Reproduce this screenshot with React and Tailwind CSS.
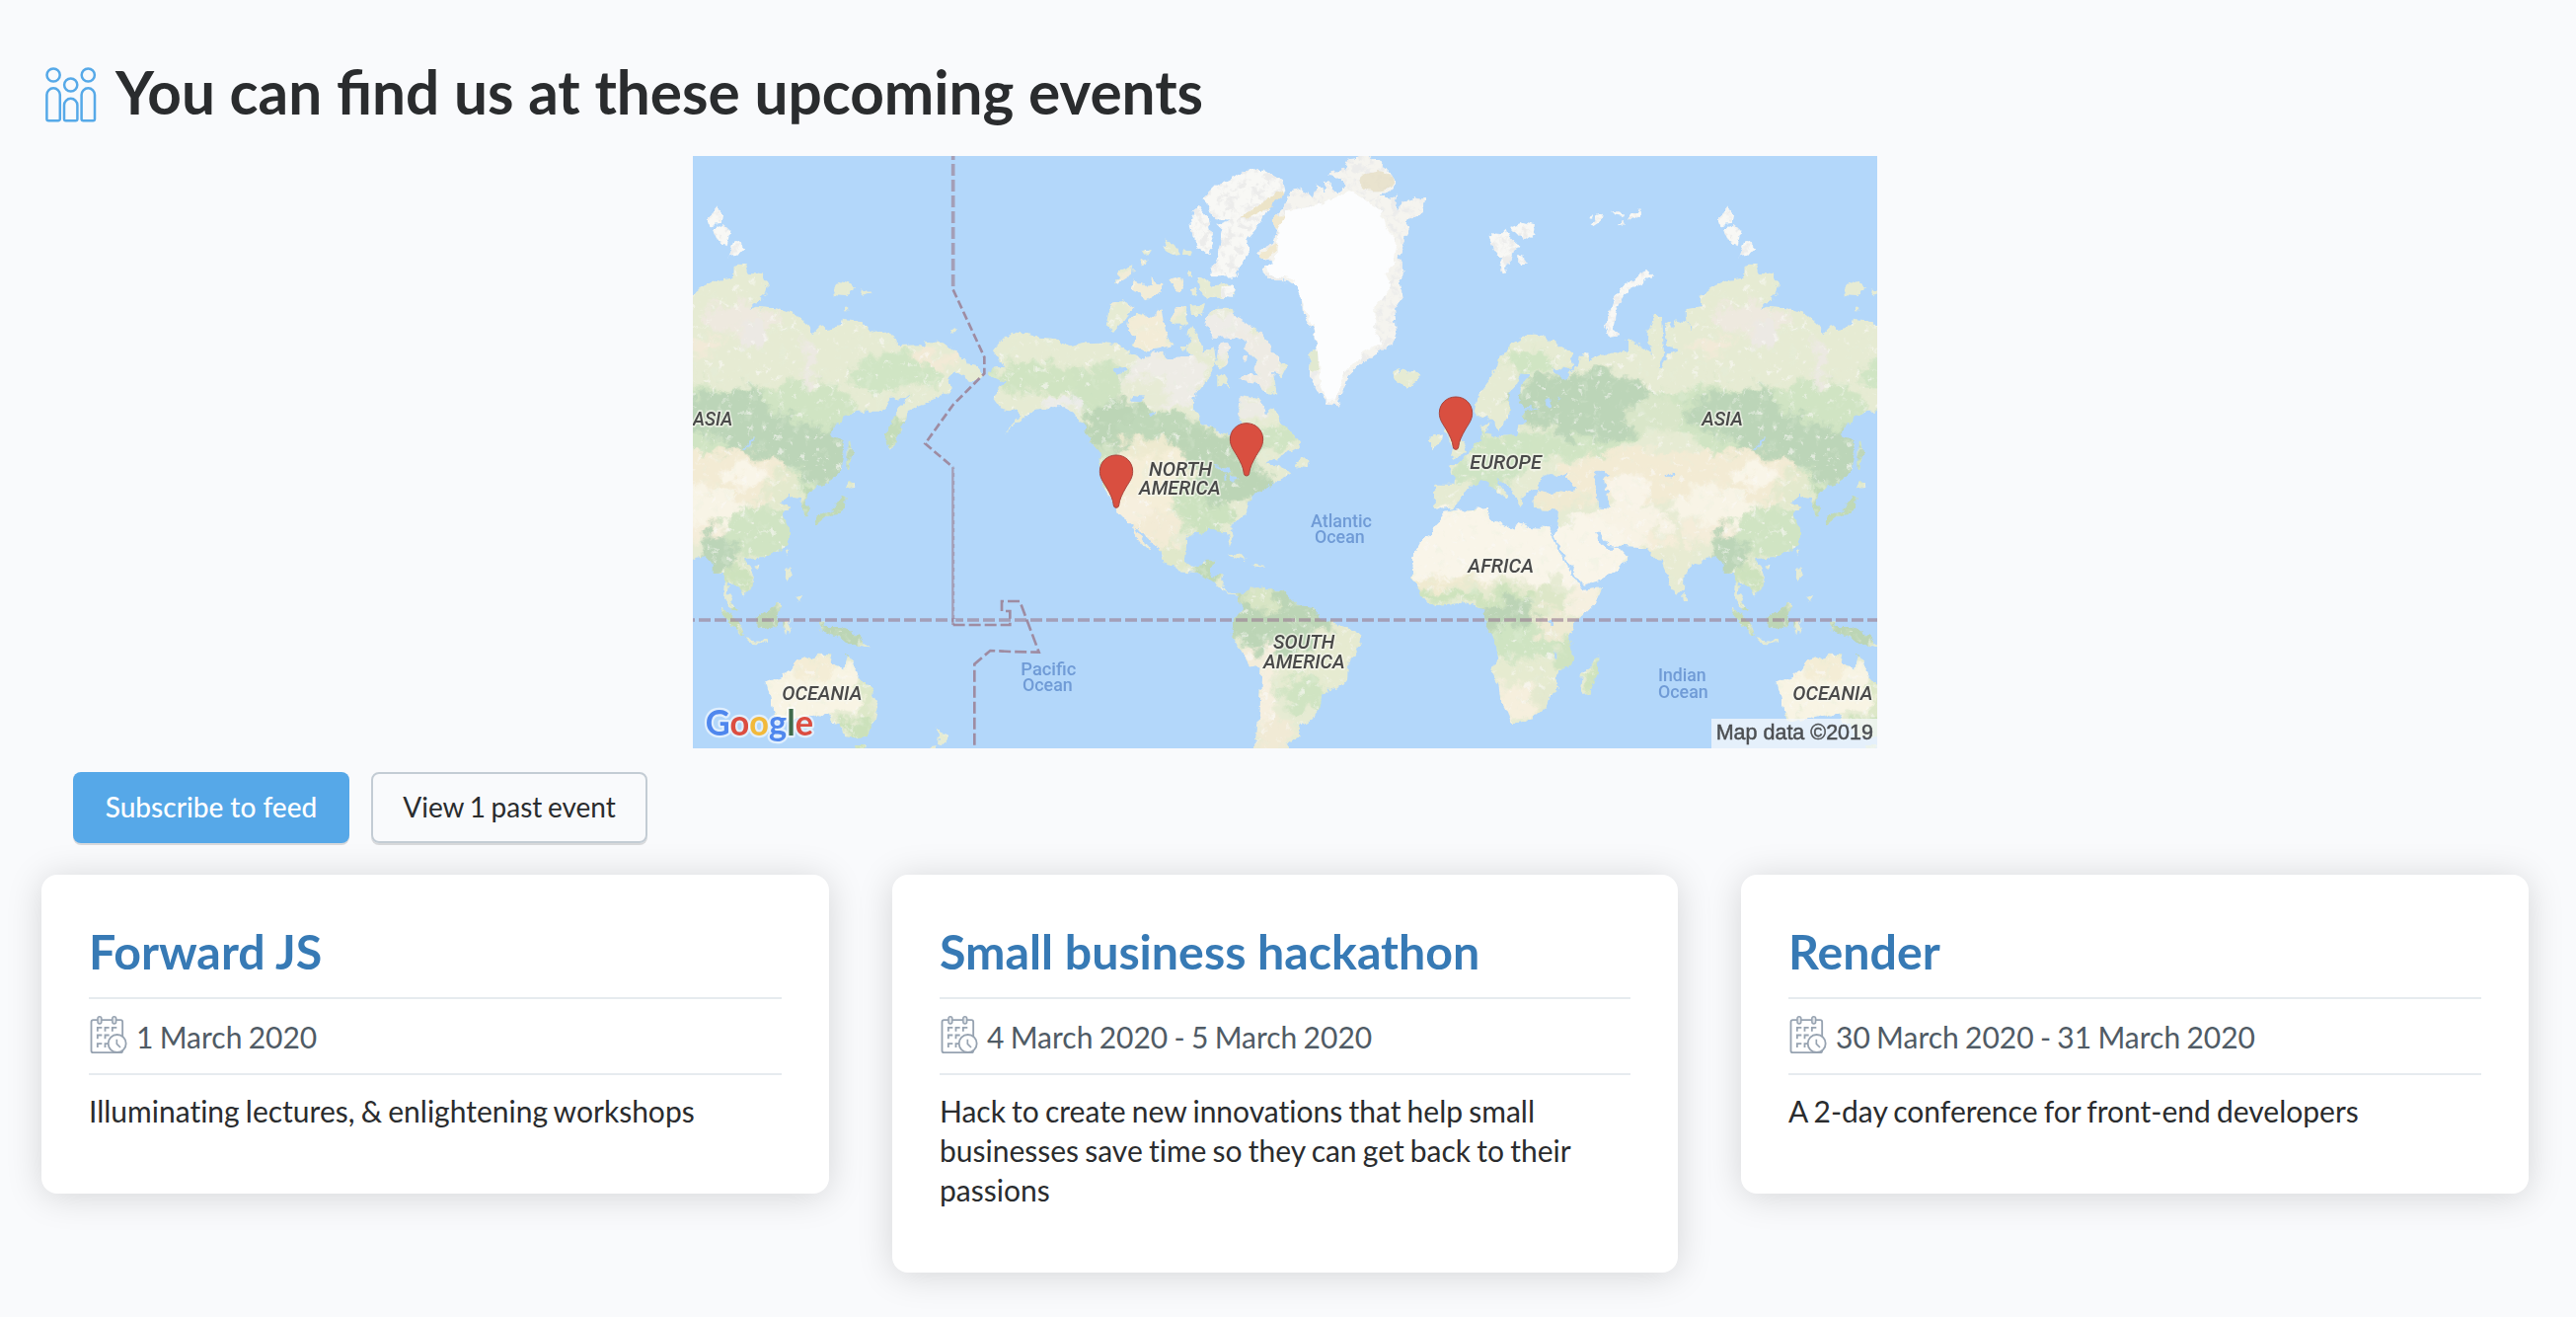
import React from 'react';

const events = [
  { title: 'Forward JS', date: '1 March 2020', text: 'Illuminating lectures, & enlightening workshops' },
  {
    title: 'Small business hackathon',
    date: '4 March 2020 - 5 March 2020',
    text: 'Hack to create new innovations that help small businesses save time so they can get back to their passions',
  },
  { title: 'Render', date: '30 March 2020 - 31 March 2020', text: 'A 2-day conference for front-end developers' },
];

const pins = [
  [2325, 805],
  [1689, 885],
  [1293, 982],
];

const mainland = [
  // Europe and Asia
  'M2378 800L2385 765L2400 735L2425 705L2445 670L2465 625L2500 590L2550 562L2590 572L2640 600L2680 630L2685 660L2670 675L2620 665L2635 700L2655 710L2665 690L2680 672L2700 665L2705 630L2725 625L2728 650L2745 640L2790 620L2850 618L2850 590L2840 578L2870 595L2900 605L2922 630L2910 580L2912 550L2928 510L2952 510L2955 560L2957 610L2958 630L2945 665L2955 665L2970 625L2998 612L2967 605L2963 560L2960 540L2978 530L2985 550L2995 520L3030 530L3045 560L3048 590L3040 540L3025 525L3022 490L3075 480L3065 450L3100 425L3150 402L3200 395L3203 365L3215 350L3238 352L3245 380L3290 385L3305 420L3300 445L3270 470L3245 495L3272 482L3340 488L3390 505L3430 540L3445 562L3465 540L3480 550L3525 540L3528 518L3592 525L3617 555L3650 565L3682 560L3700 600L3772 598L3782 612L3792 588L3842 592L3892 630L3912 655L3942 660L3960 685L3922 708L3872 678L3854 710L3864 742L3812 765L3762 785L3727 800L3722 840L3677 920L3664 890L3667 850L3702 800L3737 745L3702 770L3687 760L3652 800L3572 800L3532 820L3494 868L3532 885L3537 915L3532 950L3527 980L3502 1010L3477 1025L3452 1025L3422 1060L3422 1075L3437 1110L3417 1118L3412 1080L3402 1065L3372 1060L3372 1050L3342 1075L3372 1090L3352 1115L3372 1160L3372 1190L3342 1225L3312 1240L3272 1248L3237 1252L3262 1295L3264 1330L3237 1358L3217 1335L3187 1315L3182 1350L3202 1380L3217 1415L3192 1400L3174 1365L3177 1300L3170 1290L3140 1290L3140 1265L3117 1240L3090 1245L3050 1270L3020 1295L3018 1340L3000 1362L2980 1330L2960 1280L2955 1250L2935 1248L2905 1213L2820 1208L2790 1205L2765 1170L2748 1168L2758 1195L2780 1220L2805 1220L2815 1208L2843 1240L2825 1275L2770 1310L2712 1328L2700 1310L2665 1260L2625 1175L2635 1150L2640 1100L2565 1095L2562 1060L2580 1045L2575 1040L2540 1050L2522 1060L2530 1080L2520 1092L2505 1055L2490 1030L2455 1010L2445 1003L2465 1035L2485 1060L2475 1070L2470 1055L2430 1030L2420 1015L2400 1010L2360 1035L2330 1080L2320 1095L2290 1100L2258 1085L2260 1025L2320 1025L2325 995L2300 965L2330 960L2365 930L2385 895L2400 890L2405 840L2425 830L2420 870L2440 880L2510 870L2515 840L2540 830L2525 815L2535 795L2580 790L2535 785L2515 770L2520 730L2550 690L2525 685L2510 720L2485 745L2490 800L2475 830L2455 860L2440 840L2420 810L2400 820L2385 820Z',
  // Africa
  'M2290 1108L2340 1097L2420 1092L2425 1125L2500 1160L2510 1140L2560 1150L2605 1152L2618 1175L2640 1230L2670 1280L2705 1335L2710 1343L2770 1335L2750 1380L2690 1440L2670 1480L2680 1520L2680 1560L2640 1590L2630 1610L2637 1645L2610 1665L2600 1700L2560 1735L2495 1750L2485 1715L2460 1670L2455 1630L2435 1590L2450 1540L2440 1490L2415 1450L2410 1405L2395 1395L2350 1378L2300 1388L2265 1393L2235 1375L2210 1340L2190 1310L2195 1270L2190 1245L2220 1190L2250 1170L2270 1130Z',
  // North America
  'M905 690L920 670L960 668L950 655L935 650L918 618L950 580L1000 555L1040 572L1100 580L1160 602L1200 592L1250 590L1300 600L1340 625L1360 635L1420 620L1450 640L1520 635L1510 600L1515 560L1525 540L1540 570L1560 620L1585 600L1595 650L1580 690L1540 740L1525 790L1550 830L1600 860L1640 870L1650 900L1680 920L1680 850L1665 810L1670 750L1730 760L1750 810L1775 790L1790 830L1830 870L1855 900L1840 915L1790 935L1750 960L1785 965L1825 985L1780 1015L1735 1040L1700 1060L1690 1110L1650 1140L1637 1165L1650 1200L1640 1205L1628 1165L1570 1160L1530 1170L1505 1190L1500 1250L1530 1275L1560 1270L1570 1250L1588 1250L1580 1300L1620 1300L1615 1330L1640 1358L1690 1358L1690 1370L1640 1362L1600 1325L1540 1290L1480 1285L1435 1255L1430 1225L1390 1190L1360 1155L1350 1155L1395 1225L1380 1215L1355 1185L1340 1140L1300 1110L1288 1085L1252 1030L1248 960L1240 920L1215 890L1195 850L1160 800L1140 790L1085 790L1040 795L1010 825L950 867L1005 815L990 800L940 790L918 760L940 730L955 710L935 705Z',
  // South America
  'M1675 1360L1690 1345L1720 1335L1800 1345L1840 1385L1890 1395L1910 1430L1940 1440L2000 1460L2035 1480L2030 1520L2000 1560L1995 1610L1970 1640L1925 1655L1910 1700L1880 1740L1845 1760L1850 1785L1820 1805L1800 1840L1710 1840L1720 1770L1730 1700L1735 1590L1690 1560L1640 1475L1650 1450L1650 1430L1680 1395L1660 1362Z',
  // Australia
  'M3302 1625L3362 1600L3392 1560L3442 1545L3462 1538L3502 1540L3497 1560L3537 1588L3547 1530L3562 1560L3577 1600L3617 1640L3642 1690L3632 1740L3607 1785L3572 1790L3537 1785L3522 1750L3502 1745L3492 1725L3452 1718L3402 1730L3372 1740L3327 1745L3317 1690Z',
];

const islands = [
  'M2290 850L2320 830L2330 870L2345 900L2358 930L2310 942L2318 905Z',
  'M2250 885L2265 872L2283 868L2278 905L2250 915Z',
  // Iceland
  'M2130 680L2150 672L2155 685L2200 668L2217 690L2205 710L2175 728L2150 715Z',
  // Madagascar
  'M2710 1590L2740 1570L2757 1545L2760 1570L2735 1655L2712 1658L2704 1635Z',
  // Japan and Sakhalin
  'M3445 1130L3460 1115L3500 1100L3520 1080L3530 1055L3542 1060L3540 1090L3530 1112L3500 1115L3475 1130L3455 1145Z',
  'M3545 1005L3575 1018L3570 1028L3545 1033Z',
  'M3548 890L3556 890L3562 930L3552 980L3547 975Z',
  // Philippines
  'M3360 1280L3370 1275L3378 1300L3365 1315Z',
  'M3392 1365L3410 1358L3405 1380Z',
  'M3360 1220L3370 1218L3365 1240Z',
  'M3265 1268L3277 1262L3275 1275Z',
  // Indonesia and New Guinea
  'M3155 1390L3185 1410L3215 1440L3238 1475L3230 1482L3195 1450Z',
  'M3270 1425L3305 1405L3335 1382L3348 1390L3335 1420L3330 1455L3290 1462L3272 1445Z',
  'M3235 1492L3305 1498L3308 1505L3245 1502Z',
  'M3355 1440L3380 1432L3370 1450L3378 1475L3362 1460L3357 1480Z',
  'M3458 1440L3475 1438L3480 1455L3530 1455L3575 1480L3615 1520L3580 1508L3545 1510L3510 1480L3470 1465Z',
  'M3015 1355L3030 1362L3028 1378L3018 1378Z',
  // New Zealand
  'M3815 1755L3835 1780L3850 1788L3835 1815L3825 1812L3828 1790Z',
  'M3800 1822L3818 1818L3810 1840L3795 1840Z',
  'M3570 1818L3600 1818L3590 1840L3575 1840Z',
  // Caribbean
  'M1630 1232L1665 1238L1692 1256L1660 1248Z',
  'M1712 1262L1745 1270L1715 1275Z',
  // Newfoundland
  'M1835 965L1855 935L1878 955L1870 972Z',
  // Siberian islands
  'M3505 430L3520 405L3555 412L3570 425L3550 450L3510 448Z',
  'M3585 430L3620 442L3600 450Z',
  'M3532 490L3545 480L3558 490Z',
  'M3858 555L3880 546L3888 555L3865 566Z',
  // Canadian arctic islands
  'M1275 465L1310 460L1345 485L1320 520L1290 555L1262 535Z',
  'M1330 520L1355 500L1400 515L1430 490L1440 560L1465 600L1380 618L1340 600L1355 575L1325 555Z',
  'M1470 485L1505 480L1500 500L1510 530L1490 545L1460 515Z',
  'M1520 480L1560 475L1550 510L1525 510Z',
  'M1570 500L1600 485L1630 485L1650 490L1655 510L1690 530L1720 550L1755 590L1770 620L1810 665L1795 695L1770 680L1780 740L1755 750L1715 710L1672 705L1680 690L1720 690L1715 640L1680 610L1690 590L1650 580L1580 575L1568 530Z',
  'M1605 600L1630 590L1640 600L1630 660L1610 670L1595 655Z',
  'M1600 690L1615 685L1642 725L1615 718L1600 728Z',
  'M1345 400L1370 410L1385 425L1400 420L1400 385L1415 410L1432 415L1430 440L1380 460L1365 440L1335 430Z',
  'M1290 400L1310 370L1345 355L1340 385L1300 410Z',
  'M1435 280L1470 292L1488 325L1475 330L1450 320Z',
  'M1500 300L1520 315L1515 335L1497 325Z',
  'M1450 400L1490 390L1500 430L1480 440Z',
  'M1515 430L1530 425L1538 445L1518 450Z',
  'M1510 375L1530 375L1530 392L1515 392Z',
  'M1540 390L1570 400L1580 420L1625 412L1655 430L1650 450L1570 458L1550 440Z',
  'M1360 340L1390 335L1390 352L1375 355Z',
  'M1370 310L1395 303L1400 318L1375 320Z',
  'M1678 630L1692 630L1688 648L1678 645Z',
  'M1490 600L1510 600L1505 615Z',
];

// Islands under snow or bare rock
const snow = [
  'M1560 150L1600 110L1680 70L1740 65L1800 100L1808 130L1760 170L1730 230L1690 280L1698 320L1660 360L1665 392L1580 390L1580 370L1600 340L1620 250L1600 230L1640 215L1590 210Z',
  'M1540 175L1515 220L1530 290L1570 325L1590 290L1575 220Z',
  'M3125 220L3140 190L3150 178L3165 205L3160 230L3130 235Z',
  'M3135 245L3170 232L3190 250L3182 298L3150 280Z',
  'M3205 280L3215 285L3235 305L3220 322L3185 328Z',
  'M2425 260L2460 265L2480 245L2490 275L2515 295L2495 320L2475 382L2455 360L2470 330L2440 315Z',
  'M2490 240L2530 225L2565 235L2560 260L2530 280Z',
  'M2515 325L2530 325L2540 350L2515 352Z',
  'M2790 575L2775 545L2790 510L2805 460L2830 420L2880 390L2910 375L2922 385L2900 405L2850 430L2825 470L2812 500L2805 540L2820 570Z',
  'M2720 212L2740 202L2735 215Z',
  'M2735 235L2755 205L2772 200L2768 220L2745 235Z',
  'M2800 188L2835 200L2830 210L2808 205Z',
  'M2845 215L2860 195L2885 195L2890 180L2892 200L2860 222Z',
  'M2815 235L2835 222L2838 232Z',
  'M1610 425L1640 412L1658 435L1640 455L1608 450Z',
];

const greenland =
  'M1810 170L1820 130L1860 120L1890 150L1900 105L1930 140L1925 100L1945 110L1970 135L1985 110L1960 90L1930 75L1990 60L2000 30L2060 20L2100 45L2140 100L2130 130L2095 140L2130 155L2150 140L2140 190L2170 160L2200 150L2230 160L2220 200L2175 225L2185 240L2165 290L2150 330L2170 370L2155 400L2165 450L2140 490L2145 560L2130 600L2080 625L2050 640L2000 690L1980 740L1965 785L1940 780L1910 740L1880 690L1885 620L1900 610L1890 550L1860 500L1855 460L1835 415L1800 400L1760 400L1735 370L1770 350L1715 320L1770 290L1780 250L1765 220L1800 185Z';
const iceSheet =
  'M1815 190L1900 175L1960 150L2000 130L2050 160L2100 190L2110 240L2130 270L2145 300L2135 350L2110 380L2130 420L2080 480L2080 560L2100 590L2040 625L1985 690L1960 770L1935 770L1915 720L1905 620L1890 540L1855 460L1830 400L1760 385L1745 360L1778 340L1780 290L1785 245Z';

const water = [
  'M2585 1000L2610 990L2635 1000L2665 980L2660 1000L2690 1035L2685 1050L2650 1042L2600 1048L2575 1040Z',
  'M2740 1005L2765 980L2800 995L2775 1005L2780 1030L2795 1045L2785 1055L2795 1095L2760 1090L2755 1040Z',
  'M2965 995L2985 980L2990 985L2970 1000Z',
  'M3230 915L3265 875L3270 870L3262 892L3235 918Z',
  'M2595 770L2608 765L2610 785L2598 788Z',
  'M2630 750L2642 765L2640 772Z',
  'M1285 670L1320 665L1325 675L1295 690Z',
  'M1345 750L1380 755L1365 772L1340 770Z',
  'M1390 808L1415 800L1400 815Z',
  'M1590 965L1630 972L1640 985L1615 985Z',
  'M1620 985L1632 1010L1622 1015Z',
  'M1640 990L1665 1000L1650 1020L1640 1005Z',
  'M2608 1440L2622 1438L2620 1452L2608 1452Z',
  'M2625 1525L2632 1535L2632 1555L2626 1550Z',
];

// Vegetation and desert zones: [cx, cy, rx, ry, fill]
const zones = [
  [3200, 900, 480, 180, '#d0e4c3'],
  [2740, 780, 190, 105, '#bcd5b8'],
  [2930, 820, 90, 60, '#d9e6c9'],
  [3220, 805, 190, 80, '#bcd5b8'],
  [3330, 900, 160, 75, '#bcd5b8'],
  [3420, 760, 150, 50, '#d0e4c3'],
  [3690, 680, 140, 60, '#d0e5c4'],
  [3680, 870, 50, 60, '#c4dcb9'],
  [3470, 940, 80, 100, '#bcd5b8'],
  [2580, 770, 90, 80, '#bcd5b8'],
  [2540, 650, 80, 35, '#d0e5c3'],
  [2550, 910, 180, 45, '#cfe4c3'],
  [2420, 980, 110, 45, '#cfe4c4'],
  [2650, 900, 90, 30, '#d0e4c3'],
  [2950, 930, 130, 70, '#e6ebd3'],
  [2900, 1000, 270, 80, '#f3ebd4'],
  [3130, 1010, 260, 90, '#f3ebd4'],
  [3110, 1090, 130, 60, '#f8f4e6'],
  [2850, 1060, 60, 80, '#f9f4e8'],
  [3240, 990, 80, 30, '#f9f5e8'],
  [3080, 1170, 110, 25, '#f5edda'],
  [2840, 1150, 150, 60, '#f8f3e5'],
  [2720, 1230, 140, 100, '#f9f5e9'],
  [2980, 1240, 70, 90, '#e8ebd2'],
  [2960, 1195, 45, 25, '#f5edd9'],
  [2620, 1065, 90, 30, '#f0ead2'],
  [3280, 1170, 110, 80, '#d0e4c3'],
  [3160, 1230, 50, 70, '#bcd5b8'],
  [3230, 1310, 45, 50, '#cde2bd'],
  [3350, 1040, 60, 50, '#e3e9cd'],
  [3040, 620, 110, 60, '#e6ebd3'],
  [3220, 520, 110, 45, '#eee9df'],
  [3100, 600, 60, 30, '#f2ead8'],
  [3260, 570, 40, 35, '#ece9e4'],
  [3820, 640, 60, 25, '#f2ead6'],
  [3430, 640, 20, 90, '#ece9e2'],
  [2400, 1220, 270, 140, '#f9f5e9'],
  [2330, 1335, 200, 30, '#f0ead0'],
  [2450, 1345, 160, 28, '#e6ead0'],
  [2300, 1370, 120, 25, '#cee3bd'],
  [2500, 1370, 120, 28, '#cfe3be'],
  [2500, 1430, 120, 60, '#bcd4b6'],
  [2530, 1500, 130, 50, '#cfe4c2'],
  [2600, 1390, 50, 60, '#dde7c8'],
  [2720, 1380, 60, 60, '#f6f0e0'],
  [2620, 1450, 50, 50, '#eeead3'],
  [2660, 1540, 30, 50, '#cfe3c0'],
  [2540, 1590, 110, 35, '#e6ebd0'],
  [2520, 1680, 70, 60, '#f6efdd'],
  [2595, 1670, 30, 60, '#e4e9cf'],
  [1060, 700, 150, 50, '#d0e4c2'],
  [1160, 780, 90, 25, '#ececea'],
  [1260, 740, 100, 80, '#cfe3c2'],
  [1300, 840, 110, 85, '#bcd5b6'],
  [1430, 850, 140, 50, '#bfd8b9'],
  [1550, 920, 200, 60, '#bcd5b6'],
  [1440, 700, 130, 80, '#eeece6'],
  [1380, 740, 80, 40, '#e7ebd5'],
  [1710, 790, 50, 40, '#ecebe4'],
  [1780, 880, 70, 40, '#d0e4c3'],
  [1390, 1010, 140, 110, '#f5eed8'],
  [1390, 910, 90, 30, '#eeead0'],
  [1270, 960, 45, 60, '#cfe1c2'],
  [1560, 1080, 90, 100, '#cce2bf'],
  [1640, 1020, 120, 70, '#bcd5b6'],
  [1400, 1160, 90, 60, '#f3ebd6'],
  [1340, 1100, 60, 40, '#f6efde'],
  [1470, 1240, 60, 40, '#e0e8ca'],
  [1580, 1280, 60, 40, '#c0d9b6'],
  [1800, 1430, 170, 115, '#bcd5b6'],
  [1740, 1370, 60, 40, '#d8e5c4'],
  [1960, 1520, 80, 70, '#e6ead0'],
  [1900, 1610, 110, 70, '#e6ebd1'],
  [1860, 1660, 70, 60, '#d0e4c2'],
  [1750, 1640, 28, 140, '#f6efdf'],
  [1780, 1790, 60, 60, '#f1ead5'],
  [1700, 1560, 50, 30, '#f3ecda'],
  [3440, 1650, 170, 90, '#f8f4e4'],
  [3440, 1580, 80, 35, '#f4edd6'],
  [3600, 1650, 24, 120, '#dde8c8'],
  [3590, 1770, 60, 35, '#cbe1ba'],
  [3310, 1430, 60, 60, '#bdd5b5'],
  [3530, 1480, 90, 50, '#bcd5b5'],
  [3200, 1450, 50, 60, '#c4dbb6'],
  [3480, 1100, 90, 60, '#c0d9b6'],
  [2750, 1600, 20, 60, '#cfe3bd'],
  [1400, 430, 120, 70, '#f1ecd8'],
  [1400, 560, 80, 60, '#f3ecd7'],
  [1620, 560, 80, 60, '#eeece8'],
  [1720, 650, 80, 90, '#eeebe4'],
];

function WorldMap() {
  return (
    <svg className="block h-[600px] w-[1200px]" viewBox="6 24 3600 1800" fontFamily="Roboto, sans-serif">
      <defs>
        <clipPath id="land">
          {mainland.concat(islands).map((d) => (
            <path key={d} d={d} />
          ))}
        </clipPath>
        <clipPath id="greenland">
          <path d={greenland} />
        </clipPath>
        <filter id="coast" filterUnits="userSpaceOnUse" x="0" y="0" width="4000" height="1850">
          <feTurbulence type="fractalNoise" baseFrequency="0.035" numOctaves="3" seed="4" result="n" />
          <feDisplacementMap in="SourceGraphic" in2="n" scale="26" xChannelSelector="R" yChannelSelector="G" />
          <feGaussianBlur stdDeviation="1.8" />
        </filter>
        <filter id="zone" filterUnits="userSpaceOnUse" x="0" y="0" width="4000" height="1850">
          <feTurbulence type="fractalNoise" baseFrequency="0.02" numOctaves="4" seed="9" result="n" />
          <feGaussianBlur in="SourceGraphic" stdDeviation="6" result="b" />
          <feDisplacementMap in="b" in2="n" scale="90" xChannelSelector="R" yChannelSelector="G" />
        </filter>
        <filter id="speckle" filterUnits="userSpaceOnUse" x="0" y="0" width="4000" height="1850">
          <feTurbulence type="fractalNoise" baseFrequency="0.045" numOctaves="3" seed="21" />
          <feColorMatrix values="0 0 0 0 0.96  0 0 0 0 0.95  0 0 0 0 0.93  6 0 0 0 -3.8" />
        </filter>
        <filter id="moss" filterUnits="userSpaceOnUse" x="0" y="0" width="4000" height="1850">
          <feTurbulence type="fractalNoise" baseFrequency="0.03" numOctaves="3" seed="33" />
          <feColorMatrix values="0 0 0 0 0.78  0 0 0 0 0.87  0 0 0 0 0.72  0 5 0 0 -3" />
        </filter>
        <filter id="rock" filterUnits="userSpaceOnUse" x="0" y="0" width="4000" height="1850">
          <feTurbulence type="fractalNoise" baseFrequency="0.04" numOctaves="3" seed="5" />
          <feColorMatrix values="0 0 0 0 0.84  0 0 0 0 0.84  0 0 0 0 0.83  0 6 0 0 -2.9" result="r" />
          <feComposite in="r" in2="SourceGraphic" operator="in" result="c" />
          <feMerge>
            <feMergeNode in="SourceGraphic" />
            <feMergeNode in="c" />
          </feMerge>
        </filter>
        <filter id="soft">
          <feGaussianBlur stdDeviation="1.8" />
        </filter>
        <g id="world">
          <g filter="url(#coast)">
            <g clipPath="url(#land)">
              <rect x="0" y="0" width="4000" height="1850" fill="#e6ebd3" />
              <g filter="url(#zone)">
                {zones.map(([cx, cy, rx, ry, fill], i) => (
                  <ellipse key={i} cx={cx} cy={cy} rx={rx} ry={ry} fill={fill} />
                ))}
              </g>
              <rect x="0" y="0" width="4000" height="1850" filter="url(#moss)" opacity="0.3" />
              <rect x="0" y="0" width="4000" height="1850" filter="url(#speckle)" opacity="0.6" />
            </g>
            <g fill="#f8f8f5" filter="url(#rock)">
              {snow.map((d) => (
                <path key={d} d={d} />
              ))}
            </g>
            <g clipPath="url(#greenland)">
              <path d={greenland} fill="#f5f4ef" filter="url(#rock)" />
              <ellipse cx="2085" cy="100" rx="50" ry="30" fill="#e6dfc6" opacity="0.8" />
              <ellipse cx="1790" cy="225" rx="35" ry="20" fill="#f0e8cf" />
              <path d="M1790 285L1720 330L1760 335Z" fill="#f0e8cf" />
              <ellipse cx="1892" cy="645" rx="14" ry="35" fill="#e1e9d0" />
              <path d={iceSheet} fill="#fcfdfe" />
            </g>
            <path d="M1670 210L1740 165L1800 125L1805 140L1760 175L1690 215Z" fill="#ece4c8" />
            <g fill="#b3d7fa">
              {water.map((d) => (
                <path key={d} d={d} />
              ))}
            </g>
          </g>
        </g>
      </defs>
      <rect x="6" y="24" width="3600" height="1800" fill="#b3d7fa" />
      <use href="#world" transform="translate(-3072 0)" />
      <use href="#world" />
      <g fill="none" stroke="#9b7f93" strokeOpacity="0.65" filter="url(#soft)">
        <path d="M-24 1434H3606" strokeWidth="11" strokeDasharray="36 12" />
        <path d="M797 0V430" strokeWidth="11" strokeDasharray="36 12" />
        <path d="M797 430L892 635V685L797 780L712 898L797 970" strokeWidth="8" strokeDasharray="26 11" strokeOpacity="0.85" />
        <path d="M797 970V1449" strokeWidth="9" />
        <path d="M802 975V1449" strokeWidth="5" strokeDasharray="12 12" stroke="#b3d7fa" strokeOpacity="1" />
        <path
          d="M797 1449H970V1407H945V1377H1000L1058 1532L970 1530L910 1527L862 1568V1826"
          strokeWidth="8"
          strokeDasharray="36 12"
          strokeOpacity="0.85"
        />
      </g>
      <g
        fontSize="60"
        fontStyle="italic"
        fontWeight="500"
        fill="#4a4a4a"
        stroke="#f7f6ee"
        strokeOpacity="0.7"
        strokeWidth="10"
        strokeLinejoin="round"
        paintOrder="stroke"
        filter="url(#soft)"
      >
        <text x="6" y="842" textLength="121" lengthAdjust="spacingAndGlyphs">ASIA</text>
        <text x="3073" y="842" textLength="125" lengthAdjust="spacingAndGlyphs">ASIA</text>
        <text x="1392" y="997" textLength="192" lengthAdjust="spacingAndGlyphs">NORTH</text>
        <text x="1362" y="1052" textLength="248" lengthAdjust="spacingAndGlyphs">AMERICA</text>
        <text x="1770" y="1520" textLength="187" lengthAdjust="spacingAndGlyphs">SOUTH</text>
        <text x="1740" y="1581" textLength="248" lengthAdjust="spacingAndGlyphs">AMERICA</text>
        <text x="2368" y="975" textLength="218" lengthAdjust="spacingAndGlyphs">EUROPE</text>
        <text x="2362" y="1291" textLength="200" lengthAdjust="spacingAndGlyphs">AFRICA</text>
        <text x="277" y="1676" textLength="243" lengthAdjust="spacingAndGlyphs">OCEANIA</text>
        <text x="3349" y="1676" textLength="243" lengthAdjust="spacingAndGlyphs">OCEANIA</text>
      </g>
      <g fontSize="53" fontWeight="500" fill="#6f9bd6" filter="url(#soft)">
        <text x="1003" y="1602" textLength="168" lengthAdjust="spacingAndGlyphs">Pacific</text>
        <text x="1008" y="1651" textLength="152" lengthAdjust="spacingAndGlyphs">Ocean</text>
        <text x="1884" y="1152" textLength="186" lengthAdjust="spacingAndGlyphs">Atlantic</text>
        <text x="1896" y="1201" textLength="152" lengthAdjust="spacingAndGlyphs">Ocean</text>
        <text x="2940" y="1621" textLength="146" lengthAdjust="spacingAndGlyphs">Indian</text>
        <text x="2940" y="1670" textLength="152" lengthAdjust="spacingAndGlyphs">Ocean</text>
      </g>
      {pins.map(([x, y]) => (
        <path
          key={x}
          transform={`translate(${x} ${y})`}
          d="M0 -49C28 -49 50 -28 50 0C50 20 40 32 29 50C18 70 10 84 8 104Q7 111 0 111Q-7 111 -8 104C-10 84 -18 70 -29 50C-40 32 -50 20 -50 0C-50 -28 -28 -49 0 -49Z"
          fill="#d94f40"
          stroke="#a8443c"
          strokeWidth="3"
        />
      ))}
      <text
        x="44"
        y="1785"
        fontFamily="Lato, sans-serif"
        fontSize="110"
        fontWeight="700"
        textLength="328"
        lengthAdjust="spacingAndGlyphs"
        stroke="#ffffff"
        strokeOpacity="0.6"
        strokeWidth="14"
        strokeLinejoin="round"
        paintOrder="stroke"
        filter="url(#soft)"
      >
        <tspan fill="#4f87ee">G</tspan>
        <tspan fill="#dc4d41">o</tspan>
        <tspan fill="#f2b93b">o</tspan>
        <tspan fill="#4f87ee">g</tspan>
        <tspan fill="#3f6b4c">l</tspan>
        <tspan fill="#dc4d41">e</tspan>
      </text>
      <rect x="3102" y="1734" width="504" height="90" fill="#f5f8fb" fillOpacity="0.75" />
      <text
        x="3116"
        y="1797"
        fontFamily="Liberation Sans, sans-serif"
        fontSize="66"
        fill="#4c4f52"
        stroke="#4c4f52"
        strokeWidth="1.5"
        textLength="478"
        lengthAdjust="spacingAndGlyphs"
        filter="url(#soft)"
      >
        Map data ©2019
      </text>
    </svg>
  );
}

function PeopleIcon() {
  return (
    <svg className="mt-[9px] h-[60px] w-[56px]" viewBox="44 66 56 60" fill="none" stroke="#56a9e8" strokeWidth="2.5">
      <circle cx="54.1" cy="76" r="6.6" />
      <circle cx="71.7" cy="86" r="6.6" />
      <circle cx="89.3" cy="76" r="6.6" />
      <path d="M47.4 96a6.7 6.7 0 0 1 13.4 0v24.4a1.8 1.8 0 0 1-1.8 1.8H49.2a1.8 1.8 0 0 1-1.8-1.8z" />
      <path d="M65 106.500a6.700 6.700 0 0 1 13.400 0v13.900a1.800 1.800 0 0 1-1.800 1.800H66.800a1.800 1.800 0 0 1-1.800-1.800z" />
      <path d="M82.600 96a6.700 6.700 0 0 1 13.400 0v24.400a1.800 1.800 0 0 1-1.800 1.800H84.400a1.800 1.800 0 0 1-1.800-1.800z" />
    </svg>
  );
}

function CalendarIcon() {
  return (
    <svg className="-mt-[5px] h-[42px] w-[40px] shrink-0" viewBox="180 471 120 126" fill="none" stroke="#97a3b1" strokeWidth="5.5">
      <rect x="187.5" y="489.5" width="95" height="99" rx="6" />
      <rect x="207" y="479" width="11.5" height="22" rx="5.7" fill="#e2e6ea" strokeWidth="4.5" />
      <rect x="251.5" y="479" width="11.5" height="22" rx="5.7" fill="#e2e6ea" strokeWidth="4.5" />
      <path d="M206.500 524V512.500H220M229.500 524V512.500H242M251.500 524V512.500H265M206.500 547V535.500H220M229.500 547V535.500H242M206.500 573V561.500H220M229.500 573V561.500H242" />
      <circle cx="266" cy="561" r="27" fill="#fff" />
      <path d="M265 548V562L276 573" strokeWidth="5" />
    </svg>
  );
}

function EventCard({ title, date, text }) {
  return (
    <article className="rounded-2xl bg-white px-12 pt-12 pb-16 shadow-[0_3px_36px_rgba(0,0,0,0.15)]">
      <h2 className="border-b-2 border-[#e6ebef] pb-[18px] text-[48.3px] leading-[58px] font-bold text-[#377ab5]">{title}</h2>
      <div className="flex gap-2 border-b-2 border-[#e6ebef] pt-5 pb-[18px] text-[30px] leading-9 text-[#505b65]">
        <CalendarIcon />
        <span className="h-9 [word-spacing:-1.4px]">{date}</span>
      </div>
      <p className="pt-4 text-[30px] leading-10 [font-variant-ligatures:none] [word-spacing:-1.5px]">{text}</p>
    </article>
  );
}

export default function App() {
  return (
    <main className="h-[1334px] w-[2610px] overflow-hidden bg-[#f9fafc] pt-[57px] pr-12 pl-[42px] font-['Lato',sans-serif] text-[#2a2c2e]">
      <header className="flex h-[101px] items-start gap-[17px] pl-0.5">
        <PeopleIcon />
        <h1 className="text-[60.3px] leading-[72px] font-bold whitespace-nowrap">You can find us at these upcoming events</h1>
      </header>
      <div className="flex justify-center">
        <WorldMap />
      </div>
      <div className="mt-6 flex gap-[22px] pl-8">
        <button className="h-[72px] w-[280px] rounded-lg bg-[#56a8e8] pb-0.5 text-[28px] font-medium text-white shadow-[0_2px_0_rgba(0,0,0,0.13)]">
          Subscribe to feed
        </button>
        <button className="h-[72px] w-[280px] rounded-lg border-2 border-[#c3ccd4] pb-0.5 text-[28px] [word-spacing:-1.5px] shadow-[0_2px_0_rgba(0,0,0,0.13)]">
          View 1 past event
        </button>
      </div>
      <section className="mt-8 grid grid-cols-[798px_796px_798px] items-start gap-16">
        {events.map((event) => (
          <EventCard key={event.title} {...event} />
        ))}
      </section>
    </main>
  );
}
